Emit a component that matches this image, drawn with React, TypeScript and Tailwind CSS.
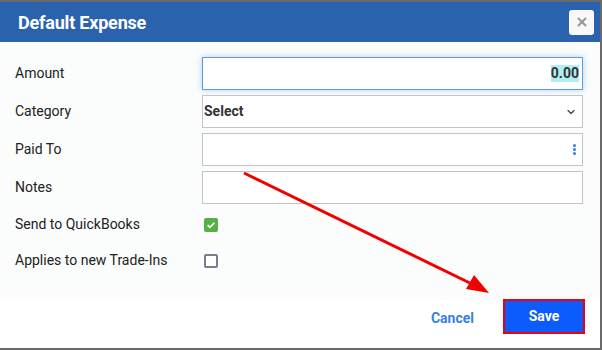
import { ChevronDown, X } from "lucide-react";

const fields = [
  { label: "Amount", kind: "amount" },
  { label: "Category", kind: "select" },
  { label: "Paid To", kind: "lookup" },
  { label: "Notes", kind: "text" },
];

function Checkbox({ checked }: { checked: boolean }) {
  if (checked) {
    return (
      <span className="ml-[2px] flex h-[14px] w-[14px] items-center justify-center rounded-[2px] bg-[#57b045]">
        <svg viewBox="0 0 12 12" className="h-[10px] w-[10px]">
          <path d="M2 6.2l2.6 2.6L10 3.4" fill="none" stroke="white" strokeWidth="2" />
        </svg>
      </span>
    );
  }
  return <span className="ml-[2px] h-[14px] w-[14px] rounded-[2px] border-2 border-[#7c7c8c] bg-white" />;
}

export default function App() {
  return (
    <div className="relative h-[350px] w-[602px] bg-[#6a6a6a] pt-[2px] font-['Roboto',sans-serif]">
      <div className="flex h-[346px] w-[600px] flex-col bg-white">
        {/* Header */}
        <div className="flex h-[40px] items-center justify-between bg-[#2a62ad] pl-[18px] pr-[6px]">
          <span className="text-[18px] font-bold tracking-[-0.2px] text-white">Default Expense</span>
          <button className="flex h-[25px] w-[25px] items-center justify-center rounded-[3px] bg-[#f8f8f8]">
            <X className="h-[14px] w-[14px] text-[#999]" strokeWidth={3.5} />
          </button>
        </div>

        {/* Body */}
        <div className="flex h-[255px] flex-col gap-[5px] bg-[#fbfcfc] pl-[15px] pt-[15px]">
          {fields.map((f) => (
            <div key={f.label} className="flex h-[33px] items-center">
              <span className="w-[187px] text-[14px] text-[#222]">{f.label}</span>
              {f.kind === "amount" && (
                <div className="flex h-[33px] w-[381px] items-center justify-end border border-[#5a9be2] bg-white pr-[3px] shadow-[0_0_6px_rgba(91,155,226,0.45)]">
                  <span className="bg-[#b0eef3] text-[14px] font-bold leading-[17px] text-[#333]">0.00</span>
                </div>
              )}
              {f.kind === "select" && (
                <div className="flex h-[33px] w-[381px] items-center justify-between border border-[#c4c4c4] bg-white pl-[1px] pr-[5px]">
                  <span className="text-[14px] font-bold text-[#333]">Select</span>
                  <ChevronDown className="h-[12px] w-[12px] text-[#444]" strokeWidth={2.5} />
                </div>
              )}
              {f.kind === "lookup" && (
                <div className="flex h-[33px] w-[381px] items-center justify-end border border-[#c4c4c4] bg-white pr-[6px]">
                  <span className="flex flex-col gap-[1px]">
                    <span className="h-[3px] w-[3px] rounded-full bg-[#2f7cf0]" />
                    <span className="h-[3px] w-[3px] rounded-full bg-[#2f7cf0]" />
                    <span className="h-[3px] w-[3px] rounded-full bg-[#2f7cf0]" />
                  </span>
                </div>
              )}
              {f.kind === "text" && (
                <div className="h-[33px] w-[381px] border border-[#c4c4c4] bg-white" />
              )}
            </div>
          ))}
          <div className="flex h-[31px] items-center">
            <span className="w-[187px] text-[14px] text-[#222]">Send to QuickBooks</span>
            <Checkbox checked />
          </div>
          <div className="flex h-[31px] items-center">
            <span className="w-[187px] text-[14px] text-[#222]">Applies to new Trade-Ins</span>
            <Checkbox checked={false} />
          </div>
        </div>

        {/* Footer */}
        <div className="flex flex-1 items-start justify-end gap-[29px] bg-white pr-[15px] pt-[2px]">
          <button className="mt-[9px] text-[14px] font-bold text-[#3a7fe6]">Cancel</button>
          <button className="h-[35px] w-[82px] border-2 border-[#f0000c] bg-[#0b5cfb] text-[14px] font-bold text-white">
            Save
          </button>
        </div>
      </div>

      {/* Annotation arrow */}
      <svg className="pointer-events-none absolute left-0 top-0" width="602" height="350">
        <line x1="244" y1="173" x2="476" y2="286" stroke="#f20000" strokeWidth="3" />
        <polygon points="489,293 466,289 474,275" fill="#f20000" />
      </svg>
    </div>
  );
}
